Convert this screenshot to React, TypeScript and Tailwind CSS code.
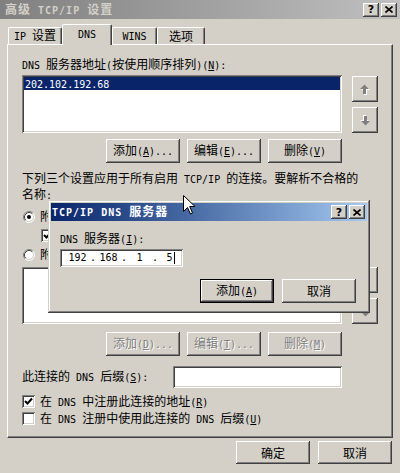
import React from "react";

const LAT = "font-['DejaVu_Sans_Mono',monospace] text-[10px]";

function T({ s, bold }: { s: string; bold?: boolean }) {
  const out: React.ReactNode[] = [];
  let k = 0;
  let cur = "";
  let curLatin = false;
  const flush = () => {
    if (!cur) return;
    out.push(
      curLatin ? (
        <span key={k++} className={LAT}>
          {cur}
        </span>
      ) : (
        <span key={k++}>{cur}</span>
      )
    );
    cur = "";
  };
  let i = 0;
  while (i < s.length) {
    let ch = s[i];
    let under = false;
    if (ch === "&" && i + 1 < s.length) {
      under = true;
      i++;
      ch = s[i];
    }
    const latin = ch.charCodeAt(0) < 0x2000;
    if (under) {
      flush();
      out.push(
        <span key={k++} className={latin ? "font-['DejaVu_Sans_Mono',monospace] text-[10px] underline underline-offset-1" : "underline"}>
          {ch}
        </span>
      );
      curLatin = latin;
      i++;
      continue;
    }
    if (cur && latin !== curLatin) flush();
    curLatin = latin;
    cur += ch;
    i++;
  }
  flush();
  return <span className={bold ? "font-bold tracking-[1px] whitespace-pre" : "whitespace-pre"}>{out}</span>;
}

const RAISED = "bg-[#d4d0c8] shadow-[inset_-1px_-1px_#404040,inset_1px_1px_#ffffff,inset_-2px_-2px_#808080]";
const SUNKEN = "shadow-[inset_1px_1px_#808080,inset_-1px_-1px_#ffffff,inset_2px_2px_#404040,inset_-2px_-2px_#d4d0c8]";

function Btn({ label, disabled, def, w = "w-[74px]", h = "h-[24px]" }: { label: string; disabled?: boolean; def?: boolean; w?: string; h?: string }) {
  return (
    <div className={`${w} ${h} ${def ? "border border-black" : ""} flex`}>
      <div
        className={`flex-1 flex items-center justify-center leading-[12px] ${RAISED} ${
          disabled ? "text-[#808080] [text-shadow:1px_1px_0_#ffffff]" : "text-black"
        }`}
      >
        <T s={label} />
      </div>
    </div>
  );
}

function Arrow({ down }: { down?: boolean }) {
  return (
    <svg width="10" height="11" viewBox="0 0 10 11" className={down ? "rotate-180" : ""}>
      <polygon points="5.5,1.5 10,6 7,6 7,11 4,11 4,6 1,6" fill="#ffffff" />
      <polygon points="4.5,0.5 9,5 6,5 6,10 3,10 3,5 0,5" fill="#808080" />
    </svg>
  );
}

function ArrowBtn({ down }: { down?: boolean }) {
  return (
    <div className={`w-[26px] h-[26px] flex items-center justify-center ${RAISED}`}>
      <Arrow down={down} />
    </div>
  );
}

function Radio({ on }: { on?: boolean }) {
  return (
    <svg width="12" height="12" viewBox="0 0 12 12" className="shrink-0">
      <circle cx="6" cy="6" r="5" fill="#ffffff" />
      <path d="M2.11 9.89 A5.5 5.5 0 0 1 9.89 2.11" stroke="#808080" fill="none" />
      <path d="M9.89 2.11 A5.5 5.5 0 0 1 2.11 9.89" stroke="#ffffff" fill="none" />
      <path d="M2.82 9.18 A4.5 4.5 0 0 1 9.18 2.82" stroke="#404040" fill="none" />
      <path d="M9.18 2.82 A4.5 4.5 0 0 1 2.82 9.18" stroke="#d4d0c8" fill="none" />
      {on && <circle cx="6" cy="6" r="2" fill="#000000" />}
    </svg>
  );
}

function Check({ on }: { on?: boolean }) {
  return (
    <div className={`w-[13px] h-[13px] shrink-0 bg-white ${SUNKEN} flex items-center justify-center`}>
      {on && (
        <svg width="9" height="9" viewBox="0 0 9 9">
          <polyline points="1,4 3.5,6.5 8,1.5" fill="none" stroke="#000" strokeWidth="2" />
        </svg>
      )}
    </div>
  );
}

function TitleBtn({ x }: { x?: boolean }) {
  return (
    <div className={`w-[16px] h-[14px] flex items-center justify-center ${RAISED}`}>
      {x ? (
        <svg width="8" height="7" viewBox="0 0 8 7">
          <path d="M0.5 0.5 L7.5 6.5 M7.5 0.5 L0.5 6.5" stroke="#000" strokeWidth="1.6" />
        </svg>
      ) : (
        <span className="font-['DejaVu_Sans',sans-serif] font-bold text-[11px] leading-[11px] text-black">?</span>
      )}
    </div>
  );
}

function Tab({ label, w, sel }: { label: string; w: string; sel?: boolean }) {
  return (
    <div
      className={`${w} ${sel ? "h-[21px] -mb-[1px] relative z-10 pb-[3px]" : "h-[17px]"} bg-[#d4d0c8] border-l border-t border-white border-r border-r-[#404040] rounded-t-[2px] shadow-[inset_-1px_0_#808080] flex items-center justify-center leading-[12px]`}
    >
      <T s={label} />
    </div>
  );
}

export default function App() {
  return (
    <div className="w-[400px] h-[473px] bg-[#d4d0c8] relative overflow-hidden font-['Noto_Sans_CJK_SC',sans-serif] text-[12px] leading-[12px] text-black">
      {/* main title bar */}
      <div className="h-[19px] bg-linear-to-r from-[#808080] to-[#c0c0c0] flex items-center pl-[5px] pr-[3px]">
        <div className="flex-1 text-[#d4d0c8]">
          <T s="高级 TCP/IP 设置" bold />
        </div>
        <div className="flex gap-[2px]">
          <TitleBtn />
          <TitleBtn x />
        </div>
      </div>

      {/* tabs */}
      <div className="mt-[5px] h-[20px] flex items-end pl-[8px]">
        <Tab label="IP 设置" w="w-[54px]" />
        <Tab label="DNS" w="w-[50px]" sel />
        <Tab label="WINS" w="w-[45px]" />
        <Tab label="选项" w="w-[48px]" />
      </div>

      {/* panel */}
      <div className="ml-[7px] w-[386px] h-[394px] border border-t-white border-l-white border-r-[#404040] border-b-[#404040] shadow-[inset_-1px_-1px_#808080] pl-[14px] flex flex-col">
        <div className="mt-[13px] h-[12px] whitespace-nowrap">
          <T s="DNS 服务器地址(按使用顺序排列)(&N):" />
        </div>
        <div className="mt-[5px] flex">
          <div className={`w-[320px] h-[58px] bg-white ${SUNKEN} p-[2px]`}>
            <div className="h-[13px] bg-[#0a246a] text-white flex items-center pl-[1px]">
              <T s="202.102.192.68" />
            </div>
          </div>
          <div className="ml-[10px] pt-[1px] flex flex-col gap-[5px]">
            <ArrowBtn />
            <ArrowBtn down />
          </div>
        </div>
        <div className="mt-[6px] w-[320px] flex justify-end gap-[7px]">
          <Btn label="添加(&A)..." />
          <Btn label="编辑(&E)..." />
          <Btn label="删除(&V)" />
        </div>
        <div className="mt-[8px] leading-[14px] whitespace-nowrap">
          <div>
            <T s="下列三个设置应用于所有启用 TCP/IP 的连接。要解析不合格的" />
          </div>
          <div>
            <T s="名称:" />
          </div>
        </div>
        <div className="mt-[8px] h-[12px] flex items-center pl-[1px]">
          <Radio on />
          <div className="ml-[5px] w-[8px] overflow-hidden whitespace-nowrap">
            <T s="附加主要的和连接特定的 DNS 后缀(&P)" />
          </div>
        </div>
        <div className="mt-[6px] h-[13px] flex items-center pl-[19px]">
          <div className="w-[7px] overflow-hidden">
            <Check on />
          </div>
        </div>
        <div className="mt-[7px] h-[12px] flex items-center pl-[1px]">
          <Radio />
          <div className="ml-[5px] w-[8px] overflow-hidden whitespace-nowrap">
            <T s="附加这些 DNS 后缀(按顺序)(&H):" />
          </div>
        </div>
        <div className="mt-[6px] flex">
          <div className={`w-[320px] h-[57px] bg-white ${SUNKEN}`} />
          <div className="ml-[10px] flex flex-col gap-[5px]">
            <ArrowBtn />
            <ArrowBtn down />
          </div>
        </div>
        <div className="mt-[8px] w-[320px] flex justify-end gap-[7px]">
          <Btn label="添加(&D)..." disabled />
          <Btn label="编辑(&T)..." disabled />
          <Btn label="删除(&M)" disabled />
        </div>
        <div className="mt-[10px] w-[320px] h-[22px] flex items-center">
          <div className="flex-1 whitespace-nowrap">
            <T s="此连接的 DNS 后缀(&S):" />
          </div>
          <div className={`w-[169px] h-[22px] bg-white ${SUNKEN}`} />
        </div>
        <div className="mt-[7px] h-[13px] flex items-center">
          <Check on />
          <div className="ml-[5px] whitespace-nowrap">
            <T s="在 DNS 中注册此连接的地址(&R)" />
          </div>
        </div>
        <div className="mt-[4px] h-[13px] flex items-center">
          <Check />
          <div className="ml-[5px] whitespace-nowrap">
            <T s="在 DNS 注册中使用此连接的 DNS 后缀(&U)" />
          </div>
        </div>
      </div>

      {/* bottom buttons */}
      <div className="mt-[3px] flex justify-end pr-[8px] gap-[8px]">
        <Btn label="确定" h="h-[23px]" />
        <Btn label="取消" h="h-[23px]" />
      </div>

      {/* popup dialog */}
      <div className="absolute left-[48px] top-[200px] w-[322px] h-[113px] bg-[#d4d0c8] p-[3px] flex flex-col shadow-[inset_-1px_-1px_#404040,inset_1px_1px_#d4d0c8,inset_-2px_-2px_#808080,inset_2px_2px_#ffffff]">
        <div className="h-[18px] bg-linear-to-r from-[#0a246a] to-[#a6caf0] flex items-center pl-[1px] pr-[2px]">
          <div className="flex-1 text-white">
            <T s="TCP/IP DNS 服务器" bold />
          </div>
          <div className="flex gap-[2px]">
            <TitleBtn />
            <TitleBtn x />
          </div>
        </div>
        <div className="mt-[11px] pl-[9px] h-[12px] whitespace-nowrap">
          <T s="DNS 服务器(&I):" />
        </div>
        <div className={`mt-[5px] ml-[9px] w-[123px] h-[18px] bg-white ${SUNKEN} flex items-center pl-[5px] ${LAT}`}>
          <div className="w-[25px] text-center">192</div>
          <div className="w-[6px] text-center">.</div>
          <div className="w-[25px] text-center">168</div>
          <div className="w-[6px] text-center">.</div>
          <div className="w-[25px] text-center">1</div>
          <div className="w-[6px] text-center">.</div>
          <div className="w-[25px] flex items-center justify-center">
            <span>5</span>
            <span className="w-px h-[12px] bg-black ml-[1px]" />
          </div>
        </div>
        <div className="mt-[12px] flex justify-end gap-[8px] pr-[11px]">
          <Btn label="添加(&A)" def />
          <Btn label="取消" />
        </div>
      </div>

      {/* mouse cursor */}
      <svg className="absolute left-[183px] top-[195px]" width="13" height="20" viewBox="0 0 13 20">
        <path d="M0.5 0.5 L0.5 16.5 L4.5 12.5 L7.5 19 L9.5 18 L6.7 11.5 L12 11.5 Z" fill="#ffffff" stroke="#000000" strokeWidth="1" />
      </svg>
    </div>
  );
}
